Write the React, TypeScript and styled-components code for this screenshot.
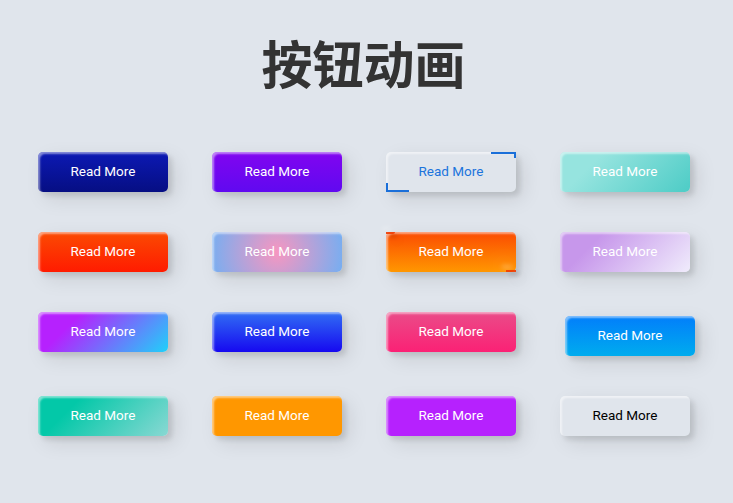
import styled, { createGlobalStyle, css } from "styled-components";

const GlobalStyle = createGlobalStyle`
  html,
  body {
    margin: 0;
    padding: 0;
    background: #e0e5ec;
  }

  body {
    font-family: Roboto, "Liberation Sans", sans-serif;
  }
`;

const Page = styled.main`
  width: 733px;
  min-height: 503px;
  background: #e0e5ec;
`;

const Title = styled.h1`
  margin: 0;
  padding: 36px 6px 0 0;
  font-family: "Noto Sans CJK SC", "Noto Sans", sans-serif;
  font-size: 51px;
  line-height: 52px;
  font-weight: 700;
  text-align: center;
  color: #333;
`;

const Grid = styled.section`
  display: grid;
  grid-template-columns: repeat(4, 130px);
  column-gap: 44px;
  row-gap: 40px;
  align-items: start;
  margin: 64px 0 0 38px;
`;

const baseShadow = css`
  box-shadow:
    inset 2px 2px 2px 0 rgba(255, 255, 255, 0.5),
    7px 7px 20px 0 rgba(0, 0, 0, 0.1),
    4px 4px 5px 0 rgba(0, 0, 0, 0.1);
`;

const Button = styled.button<{ $bg: string; $color?: string; $shift?: boolean }>`
  position: relative;
  display: flex;
  align-items: center;
  justify-content: center;
  width: 130px;
  height: 40px;
  padding: 0 0 2px;
  border: none;
  border-radius: 5px;
  font-family: Roboto, "Liberation Sans", sans-serif;
  font-size: 13.5px;
  font-weight: 400;
  color: ${p => p.$color ?? "#fff"};
  background: ${p => p.$bg};
  cursor: pointer;
  outline: none;
  ${baseShadow};
  ${p => (p.$shift ? "margin: 4px 0 0 5px;" : null)}
`;

// light button framed by two blue corner brackets
const CornerButton = styled(Button)`
  &::before,
  &::after {
    content: "";
    position: absolute;
    border-color: #1a6fd9;
    border-style: solid;
  }

  &::before {
    top: 0;
    right: 0;
    width: 23px;
    height: 4px;
    border-width: 2px 2px 0 0;
  }

  &::after {
    bottom: 0;
    left: 0;
    width: 21px;
    height: 7px;
    border-width: 0 0 2px 2px;
  }
`;

const glowShadow = css`
  background: rgba(240, 60, 2, 0.9);
  box-shadow:
    -7px -7px 20px 0 rgba(255, 255, 255, 0.6),
    -4px -4px 5px 0 rgba(255, 255, 255, 0.5),
    7px 7px 20px 0 rgba(0, 0, 0, 0.15),
    3px 3px 4px 0 rgba(0, 0, 0, 0.2);
`;

// orange button with glowing stubs in two corners
const GlowButton = styled(Button)`
  &::before,
  &::after {
    content: "";
    position: absolute;
    ${glowShadow};
  }

  &::before {
    right: 0;
    bottom: 0;
    width: 10px;
    height: 2px;
  }

  &::after {
    left: 0;
    top: 0;
    width: 9px;
    height: 2px;
    border-bottom-right-radius: 2px;
  }
`;

const label = "Read More";

export default function App() {
  return (
    <Page>
      <GlobalStyle />
      <Title>按钮动画</Title>
      <Grid>
        <Button $bg="linear-gradient(0deg, rgb(6, 14, 131) 0%, rgb(12, 25, 180) 100%)">{label}</Button>
        <Button $bg="linear-gradient(0deg, rgb(96, 9, 240) 0%, rgb(129, 5, 240) 100%)">{label}</Button>
        <CornerButton $bg="#e0e5ec" $color="#1c74dc">{label}</CornerButton>
        <Button $bg="linear-gradient(315deg, #4dccc6 0%, #96e4df 74%)">{label}</Button>

        <Button $bg="linear-gradient(0deg, rgb(255, 27, 0) 0%, rgb(251, 75, 2) 100%)">{label}</Button>
        <Button $bg="radial-gradient(circle, rgb(247, 150, 192) 0%, rgb(118, 174, 241) 100%)">{label}</Button>
        <GlowButton $bg="linear-gradient(0deg, rgb(255, 151, 0) 0%, rgb(251, 75, 2) 100%)">{label}</GlowButton>
        <Button $bg="linear-gradient(315deg, #f0ecfc 0%, #c797eb 74%)">{label}</Button>

        <Button $bg="linear-gradient(315deg, #1fd1f9 0%, #b621fe 74%)">{label}</Button>
        <Button $bg="linear-gradient(0deg, rgb(22, 9, 240) 0%, rgb(49, 110, 244) 100%)">{label}</Button>
        <Button $bg="linear-gradient(0deg, rgb(251, 33, 117) 0%, rgb(234, 76, 137) 100%)">{label}</Button>
        <Button $shift $bg="linear-gradient(0deg, rgb(0, 172, 238) 0%, rgb(2, 126, 251) 100%)">{label}</Button>

        <Button $bg="linear-gradient(315deg, #89d8d3 0%, #03c8a8 74%)">{label}</Button>
        <Button $bg="rgb(255, 151, 0)">{label}</Button>
        <Button $bg="#b621fe">{label}</Button>
        <Button $bg="#e0e5ec" $color="#000">{label}</Button>
      </Grid>
    </Page>
  );
}
